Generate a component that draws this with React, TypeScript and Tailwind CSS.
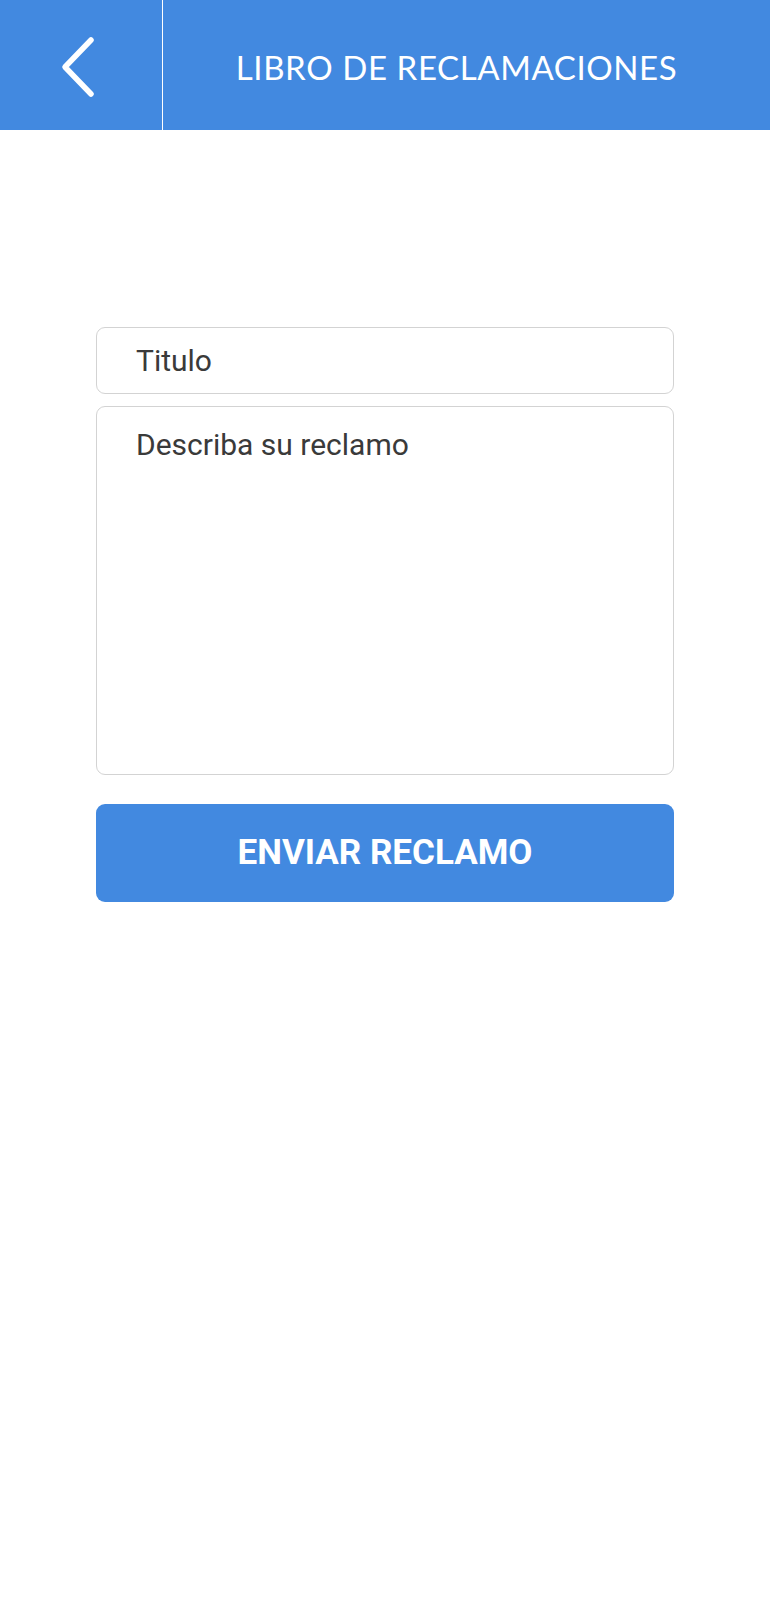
import { useState } from "react";

export default function App() {
  const [title, setTitle] = useState("");
  const [body, setBody] = useState("");

  return (
    <div className="min-h-[1622px] w-full bg-white font-['Roboto',sans-serif]">
      {/* header */}
      <header className="flex h-[130px] w-full bg-[#4289e0]">
        <button
          type="button"
          aria-label="Volver"
          className="flex h-full w-[163px] items-center justify-center border-r border-white pr-[6px] pt-[4px]"
        >
          <svg width="36" height="62" viewBox="0 0 36 62" fill="none">
            <path
              d="M31 4 L5 31 L31 58"
              stroke="white"
              strokeWidth="5.5"
              strokeLinecap="round"
              strokeLinejoin="round"
            />
          </svg>
        </button>
        <div className="flex flex-1 items-center justify-center pr-[20px] pt-[6px]">
          <h1 className="font-['Lato',sans-serif] text-[33px] font-normal tracking-[0.6px] text-white">
            LIBRO DE RECLAMACIONES
          </h1>
        </div>
      </header>

      {/* form */}
      <form
        className="mx-auto mt-[197px] flex w-[578px] flex-col"
        onSubmit={(e) => e.preventDefault()}
      >
        <input
          type="text"
          placeholder="Titulo"
          value={title}
          onChange={(e) => setTitle(e.target.value)}
          className="h-[67px] w-full rounded-[9px] border border-[#d3d3d3] px-[39px] text-[30px] text-[#3a3a3a] placeholder:text-[#3a3a3a] focus:outline-none"
        />
        <textarea
          placeholder="Describa su reclamo"
          value={body}
          onChange={(e) => setBody(e.target.value)}
          className="mt-[12px] h-[369px] w-full resize-none rounded-[9px] border border-[#d3d3d3] px-[39px] pt-[18px] text-[30px] leading-[40px] text-[#3a3a3a] placeholder:text-[#3a3a3a] focus:outline-none"
        />
        <button
          type="submit"
          className="mt-[29px] h-[98px] w-full rounded-[9px] bg-[#4289e0] text-[35px] font-bold text-white"
        >
          ENVIAR RECLAMO
        </button>
      </form>
    </div>
  );
}
